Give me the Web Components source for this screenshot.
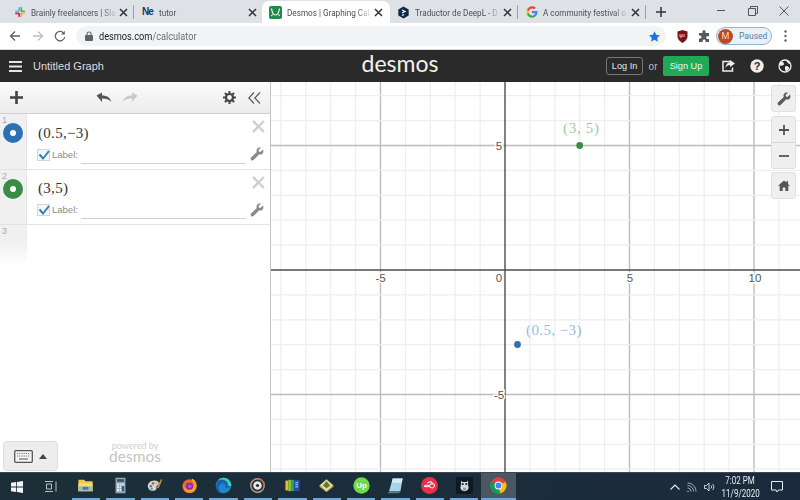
<!DOCTYPE html>
<html>
<head>
<meta charset="utf-8">
<title>Desmos | Graphing Calculator</title>
<style>
html, body { margin: 0; height: 100%; overflow: hidden; }
body { width: 800px; height: 500px; display: flex; flex-direction: column; font-family: "Liberation Sans", Arial, sans-serif; background: #fff; }
</style>
</head>
<body>
<tab-strip>
  <chrome-tab label="Brainly freelancers | Sla" width="133" style="padding-left:13px">
    <svg slot="icon" width="12" height="12" viewBox="0 0 12 12"><rect x="1" y="4.4" width="4.4" height="1.7" rx=".8" fill="#36c5f0"/><rect x="4.3" y="1" width="1.7" height="4" rx=".8" fill="#36c5f0"/><rect x="6.4" y="1" width="1.7" height="4.4" rx=".8" fill="#2eb67d"/><rect x="6.6" y="4.4" width="4.4" height="1.7" rx=".8" fill="#2eb67d"/><rect x="6.6" y="6.6" width="4.4" height="1.7" rx=".8" fill="#ecb22e"/><rect x="6.4" y="7" width="1.7" height="4" rx=".8" fill="#ecb22e"/><rect x="4.3" y="6.8" width="1.7" height="4.2" rx=".8" fill="#e01e5a"/><rect x="1" y="6.6" width="4.4" height="1.7" rx=".8" fill="#e01e5a"/></svg>
  </chrome-tab>
  <tab-sep></tab-sep>
  <chrome-tab label="tutor" width="128">
    <span slot="icon" style="font:bold 10px 'Liberation Sans',sans-serif;color:#123a6b;letter-spacing:-1px;line-height:12px">Ne</span>
  </chrome-tab>
  <chrome-tab label="Desmos | Graphing Cal" width="128" active>
    <svg slot="icon" width="13" height="13" viewBox="0 0 13 13"><rect width="13" height="13" rx="2" fill="#1f8a4c"/><path d="M2.5 2.5c.7 4.5 2.3 6.5 4 6.5s3.300-2 4-6.500" fill="none" stroke="#fff" stroke-width="1.100"/><path d="M2 10l2-1.500M11 10l-2-1.500" stroke="#fff" stroke-width="1"/></svg>
  </chrome-tab>
  <chrome-tab label="Traductor de DeepL - D" width="127">
    <svg slot="icon" width="13" height="13" viewBox="0 0 13 13"><path d="M6.500 .5l5.200 3v6l-5.200 3-5.200-3v-6z" fill="#0f2b46"/><path d="M5 4l3 1.500-3 1.500M5 9.500l2-1" fill="none" stroke="#fff" stroke-width="1.200"/></svg>
  </chrome-tab>
  <tab-sep></tab-sep>
  <chrome-tab label="A community festival o" width="127">
    <svg slot="icon" width="12" height="12" viewBox="0 0 12 12"><path d="M11.500 6.100c0-.4 0-.8-.1-1.100H6v2.200h3.100c-.1.700-.5 1.300-1.100 1.700v1.400h1.800c1.100-1 1.700-2.400 1.700-4.200z" fill="#4285f4"/><path d="M6 11.700c1.500 0 2.800-.5 3.800-1.400L8 8.900c-.5.300-1.200.6-2 .6-1.500 0-2.700-1-3.200-2.400H1v1.400c.9 1.900 2.800 3.200 5 3.200z" fill="#34a853"/><path d="M2.800 7.100C2.600 6.400 2.600 5.600 2.800 4.900V3.500H1C.2 5 .2 7 1 8.500z" fill="#fbbc05"/><path d="M6 2.500c.8 0 1.600.3 2.200.8l1.600-1.600C8.800.8 7.500.3 6 .3 3.800.3 1.900 1.600 1 3.500l1.800 1.400C3.300 3.500 4.500 2.500 6 2.500z" fill="#ea4335"/></svg>
  </chrome-tab>
  <tab-sep></tab-sep>
</tab-strip>
<url-bar url="desmos.com" path="/calculator"></url-bar>
<desmos-header title-text="Untitled Graph"></desmos-header>
<main-area>
  <expr-panel slot="panel">
    <expr-row index="1" color="#2d70b3" math="(0.5,−3)"></expr-row>
    <expr-row index="2" color="#388c46" math="(3,5)"></expr-row>
  </expr-panel>
  <graph-paper slot="graph"></graph-paper>
</main-area>
<task-bar>
  <task-item>
    <svg width="24" height="22" viewBox="0 0 24 22"><path d="M2 3h8l2 2h10v14H2z" fill="#f2c84b"/><path d="M2 8h20v11H2z" fill="#f9dc7a"/><path d="M2 12h20v7H2z" fill="#5aa9c9" opacity=".55"/><path d="M8 13h8v4H8z" fill="#3d7f9e"/></svg>
  </task-item>
  <task-item>
    <svg width="18" height="24" viewBox="0 0 18 24"><rect x="2" y="1" width="14" height="22" fill="#93a6b1"/><rect x="4" y="3" width="10" height="4" fill="#3c5a6c"/><path d="M4 9h3v3H4zM8 9h2v3H8zM11 9h3v3h-3zM4 13h3v3H4zM8 13h2v3H8zM4 17h3v3H4zM8 17h2v3H8z" fill="#e6edf0"/><rect x="11" y="13" width="3" height="7" fill="#1d5f96"/></svg>
  </task-item>
  <task-item>
    <svg width="24" height="24" viewBox="0 0 24 24"><path d="M3 15c-2-5 3-10 9-10 3 0 5 1 6 3 1 3-2 3-3 5s1 3-1 5-9 3-11-3z" fill="#cfd6d9"/><circle cx="7" cy="13" r="1.800" fill="#2f86c9"/><circle cx="10" cy="9" r="1.800" fill="#d9534f"/><circle cx="14.500" cy="9" r="1.500" fill="#e8c33c"/><circle cx="8" cy="17" r="1.600" fill="#4aa564"/><path d="M15 15L21 3l2 1-5 12z" fill="#b98e4a"/></svg>
  </task-item>
  <task-item>
    <svg width="24" height="24" viewBox="0 0 24 24"><circle cx="12" cy="13" r="10" fill="#f4603a"/><path d="M22 12c0-5-3-9-7-10 1 2 1 3 0 4 3 1 4 4 3 7-1 4-6 6-10 4-2-1-4-3-5-6 0 6 4 11 10 11s9-5 9-10z" fill="#f9a02b"/><circle cx="12" cy="13" r="5" fill="#7a2fa8"/><circle cx="12.500" cy="13" r="2.500" fill="#c454c9"/></svg>
  </task-item>
  <task-item>
    <svg width="24" height="24" viewBox="0 0 24 24"><circle cx="12" cy="12" r="11" fill="#1e86d1"/><path d="M1.500 14C2 6 8 1 13 1c6 0 10 5 10 10 0 3-3 4-6 4-2 0-3-1-3-2 1-1 1-3-1-4-4-1-8 2-8 6 0 3 2 6 5 8-5 0-8-4-8.500-9z" fill="#1a5fa8"/><path d="M23 12c0-6-5-11-11-11-3 0-6 1-8 4 3-2 7-2 10 0 3 1 5 4 4 7 2 1 5 1 5 0z" fill="#3ed1b0"/></svg>
  </task-item>
  <task-item>
    <svg width="24" height="24" viewBox="0 0 24 24"><circle cx="12" cy="12" r="9.500" fill="none" stroke="#c89b8c" stroke-width="2"/><path d="M12 2.500a9.500 9.500 0 0 1 9.500 9.500" fill="none" stroke="#b5684f" stroke-width="2"/><circle cx="12" cy="12" r="6" fill="#e8e4e0"/><circle cx="12" cy="12" r="2.200" fill="#2b2b2b"/></svg>
  </task-item>
  <task-item>
    <svg width="24" height="20" viewBox="0 0 24 20"><rect x="2" y="3" width="4" height="14" fill="#e6b92f"/><rect x="6" y="2" width="4" height="16" fill="#8fbe3c"/><rect x="10" y="2" width="4" height="16" fill="#3aa655"/><rect x="14" y="2" width="8" height="16" fill="#1f4fb0"/><path d="M16 6h4M16 9h4M16 12h4" stroke="#dfe8f5" stroke-width="1.200"/></svg>
  </task-item>
  <task-item>
    <svg width="24" height="22" viewBox="0 0 24 22"><path d="M12 2l10 9-10 9L2 11z" fill="#e6d58f"/><path d="M12 5l5 6-5 4-5-4z" fill="#557a3f"/><path d="M2 11l10 9 10-9v2l-10 7L2 13z" fill="#a88b45"/></svg>
  </task-item>
  <task-item>
    <svg width="24" height="24" viewBox="0 0 24 24"><circle cx="12" cy="12" r="11.500" fill="#6fda44"/><text x="12" y="16" text-anchor="middle" font-family="Liberation Sans, sans-serif" font-size="11" font-weight="bold" fill="#fff">Up</text></svg>
  </task-item>
  <task-item>
    <svg width="24" height="24" viewBox="0 0 24 24"><path d="M8 2h14l-3 18H3z" fill="#a9d3e6"/><path d="M8 2h14l-1 6H7z" fill="#d5ecf5"/><path d="M3 20h16l-2 3H1z" fill="#567f91"/></svg>
  </task-item>
  <task-item>
    <svg width="24" height="24" viewBox="0 0 24 24"><circle cx="12" cy="12" r="12" fill="#eb2f4b"/><path d="M5 14c0-3 3-3 5-2l4 3c2 1 5 0 5-3s-3-3-5-2l-4 3c-2 1-5 1-5-1z M9 9c1-2 5-3 7-1" fill="none" stroke="#fff" stroke-width="1.500"/></svg>
  </task-item>
  <task-item>
    <svg width="24" height="24" viewBox="0 0 24 24"><rect width="24" height="24" fill="#0c1a22"/><path d="M7 5l2 2h6l2-2v7c2 3 0 8-5 8s-7-5-5-8z" fill="#d6dadc"/><circle cx="9.500" cy="10" r="1.600" fill="#20282d"/><circle cx="14.500" cy="10" r="1.600" fill="#20282d"/><path d="M10 15h4v4h-4z" fill="#8d979c"/></svg>
  </task-item>
  <task-item active>
    <svg width="24" height="24" viewBox="0 0 24 24"><circle cx="12" cy="12" r="11.500" fill="#db4437"/><path d="M12 12L22 7a11.500 11.500 0 0 1-8 16.300z" fill="#f4c20d"/><path d="M12 12l2 11.300A11.500 11.500 0 0 1 2 6z" fill="#0f9d58"/><circle cx="12" cy="12" r="5.500" fill="#fff"/><circle cx="12" cy="12" r="4.200" fill="#4285f4"/></svg>
  </task-item>
</task-bar>

<script>
const ICONS = {
  x: '<svg width="9" height="9" viewBox="0 0 9 9"><path d="M1 1l7 7M8 1l-7 7" stroke="#333" stroke-width="1.500"/></svg>',
  wrench: c => `<svg width="14" height="14" viewBox="0 0 14 14"><path d="M13 2.500L10.500 5 9 4.500 8.500 3 11 .8C9.300.2 7.500.8 6.800 2.300c-.5 1-.3 2 0 2.700L1 10.600c-.8.800-.3 2.100.4 2.600.7.500 1.600.5 2.200-.1L9.200 7.300c.8.300 1.800.300 2.700-.1 1.400-.8 2-2.800 1.100-4.700z" fill="${c}"/></svg>`
};

class TabStrip extends HTMLElement {
  constructor() {
    super();
    this.attachShadow({ mode: 'open' }).innerHTML = `
    <style>
      :host { display: flex; height: 24px; background: #dee1e6; box-sizing: border-box; padding-top: 1px; align-items: stretch; position: relative; }
      .new { width: 30px; display: flex; align-items: center; justify-content: center; }
      .win { margin-left: auto; display: flex; }
      .win div { width: 31.5px; display: flex; align-items: center; justify-content: center; margin-top: -3px; }
    </style>
    <slot></slot>
    <div class="new"><svg width="10" height="10" viewBox="0 0 10 10"><path d="M5 0v10M0 5h10" stroke="#333" stroke-width="1.500"/></svg></div>
    <div class="win">
      <div><svg width="9" height="9" viewBox="0 0 9 9"><path d="M0 4.500h8" stroke="#555"/></svg></div>
      <div><svg width="10" height="10" viewBox="0 0 10 10"><path d="M.5 2.500h7v7h-7zM2.500 2.500v-2h7v7h-2" fill="none" stroke="#555"/></svg></div>
      <div><svg width="10" height="10" viewBox="0 0 10 10"><path d="M.5.500l9 9M9.500.500l-9 9" stroke="#555"/></svg></div>
    </div>`;
  }
}

class ChromeTab extends HTMLElement {
  constructor() {
    super();
    const w = this.getAttribute('width');
    this.attachShadow({ mode: 'open' }).innerHTML = `
    <style>
      :host { display: flex; align-items: center; width: ${w}px; flex: none; box-sizing: border-box; padding: 0 0 0 7px; font: 9.500px Roboto, "Liberation Sans", sans-serif; color: #4c5054; }
      :host([active]) { background: #fff; border-radius: 7px 7px 0 0; }
      :host([active]) .close { margin-right: 7px; }
      .icon { width: 13px; height: 13px; display: flex; align-items: center; justify-content: center; flex: none; margin-right: 5px; }
      .label { flex: 1; min-width: 0; white-space: nowrap; -webkit-mask-image: linear-gradient(90deg, #000 82%, transparent 100%); mask-image: linear-gradient(90deg, #000 82%, transparent 100%); }
      /* the reference text is squeezed sideways by its downscale */
      .label span { display: block; width: 116%; transform: scaleX(.86); transform-origin: left; }
      .close { flex: none; width: 9px; margin: 0 5.500px 0 2px; display: flex; }
    </style>
    <div class="icon"><slot name="icon"></slot></div>
    <div class="label"><span>${this.getAttribute('label')}</span></div>
    <div class="close">${ICONS.x}</div>`;
  }
}

class TabSep extends HTMLElement {
  constructor() {
    super();
    this.attachShadow({ mode: 'open' }).innerHTML = `
    <style>:host { display: block; width: 1px; height: 14px; margin: 4px 0 0; background: #9da1a6; flex: none; }</style>`;
  }
}

class UrlBar extends HTMLElement {
  constructor() {
    super();
    this.attachShadow({ mode: 'open' }).innerHTML = `
    <style>
      :host { display: flex; align-items: center; height: 26px; background: #fff; flex: none; font: 10.500px Roboto, "Liberation Sans", sans-serif; }
      .nav { width: 20px; display: flex; justify-content: center; margin-left: 5px; }
      .nav + .nav { margin-left: 2.500px; }
      .omni { width: 590px; height: 20px; margin-left: 6px; background: #f1f3f4; border-radius: 10px; display: flex; align-items: center; box-sizing: border-box; padding: 0 6px 0 9px; color: #222; }
      .addr { width: 115px; flex: none; white-space: nowrap; transform: scaleX(.875); transform-origin: left; }
      .addr span { color: #6a6e73; }
      .lock { margin-right: 6px; display: flex; }
      .star { margin-left: auto; display: flex; }
      .ext { display: flex; align-items: center; }
      .pill { margin-left: 6px; width: 56px; height: 18px; box-sizing: border-box; border: 1px solid #8fb5d2; border-radius: 9px; background: #e8f1f8; display: flex; align-items: center; padding-left: 1px; gap: 6px; color: #5b7fa0; font-size: 8.500px; }
      .avatar { width: 15px; height: 15px; border-radius: 50%; background: #bd4a1c; color: #f3d9cc; font-size: 9px; text-align: center; line-height: 15px; flex: none; }
      .dots { margin-left: 11.500px; display: flex; }
    </style>
    <div class="nav"><svg width="12" height="12" viewBox="0 0 12 12"><path d="M11 6H2M6 1.500L1.500 6 6 10.500" fill="none" stroke="#5f6368" stroke-width="1.300"/></svg></div>
    <div class="nav"><svg width="12" height="12" viewBox="0 0 12 12"><path d="M1 6h9M6 1.500L10.500 6 6 10.500" fill="none" stroke="#bcc0c4" stroke-width="1.300"/></svg></div>
    <div class="nav"><svg width="12" height="12" viewBox="0 0 12 12"><path d="M10 3.500A4.700 4.700 0 1 0 10.700 7" fill="none" stroke="#5f6368" stroke-width="1.300"/><path d="M10.800 .8v3.700H7.100z" fill="#5f6368"/></svg></div>
    <div class="omni">
      <div class="lock"><svg width="8" height="10" viewBox="0 0 8 10"><rect y="4" width="8" height="6" rx="1" fill="#5f6368"/><path d="M2 4.500V3a2 2 0 0 1 4 0v1.500" fill="none" stroke="#5f6368" stroke-width="1.100"/></svg></div>
      <div class="addr">${this.getAttribute('url')}<span>${this.getAttribute('path')}</span></div>
      <div class="star"><svg width="11" height="11" viewBox="0 0 12 12"><path d="M6 .3l1.800 3.800 4.100.5-3 2.900.8 4.100L6 9.600l-3.700 2 .8-4.100-3-2.900 4.100-.5z" fill="#1a73e8"/></svg></div>
    </div>
    <div class="ext" style="margin-left:11px"><svg width="11" height="13" viewBox="0 0 11 13"><path d="M.5 1.500L5.500 0l5 1.500v5c0 3-2.500 5-5 6.500-2.500-1.500-5-3.500-5-6.500z" fill="#7d1414"/><path d="M3 4v3h2V4M7 4v3" fill="none" stroke="#f3d2d2" stroke-width=".9"/></svg></div>
    <div class="ext" style="margin-left:10px"><svg width="12" height="12" viewBox="0 0 12 12"><path d="M4.500 1.500a1.500 1.500 0 0 1 3 0V3H11v3.200H9.500a1.400 1.400 0 0 0 0 2.800H11V12H7.500v-1.200a1.400 1.400 0 0 0-2.800 0V12H1V8.500h1a1.500 1.500 0 0 0 0-3H1V3h3.500z" fill="#55585c"/></svg></div>
    <div class="pill"><div class="avatar">M</div>Paused</div>
    <div class="dots"><svg width="3" height="12" viewBox="0 0 3 12"><circle cx="1.500" cy="1.500" r="1.200" fill="#5f6368"/><circle cx="1.500" cy="6" r="1.200" fill="#5f6368"/><circle cx="1.500" cy="10.500" r="1.200" fill="#5f6368"/></svg></div>`;
  }
}

class DesmosHeader extends HTMLElement {
  constructor() {
    super();
    this.attachShadow({ mode: 'open' }).innerHTML = `
    <style>
      :host { display: flex; align-items: center; height: 32px; background: #2a2a2a; border-top: 1px solid #d8d8d8; flex: none; color: #e6e6e6; font: 9.200px "Liberation Sans", sans-serif; position: relative; box-sizing: content-box; }
      .burger { margin-left: 9px; display: flex; }
      .title { margin-left: 11px; font-size: 11px; color: #ddd; }
      .logo { position: absolute; left: 0; right: 0; text-align: center; font: 400 23px Lato, "Open Sans", sans-serif; color: #f2f2f2; line-height: 32px; top: -3px; }
      .right { margin-left: auto; display: flex; align-items: center; position: relative; }
      .login { width: 37px; height: 18px; box-sizing: border-box; border: 1px solid #777; border-radius: 3px; text-align: center; line-height: 16px; }
      .or { margin: 0 5.500px; color: #bbb; font-size: 10px; }
      .signup { width: 46px; height: 20px; background: #20aa55; border-radius: 2px; text-align: center; line-height: 20px; color: #eaf7ef; }
      .ic { display: flex; }
    </style>
    <div class="burger"><svg width="13" height="11" viewBox="0 0 13 11"><path d="M0 1h13M0 5.500h13M0 10h13" stroke="#e6e6e6" stroke-width="1.800"/></svg></div>
    <div class="title">${this.getAttribute('title-text')}</div>
    <div class="logo">desmos</div>
    <div class="right">
      <div class="login">Log In</div>
      <div class="or">or</div>
      <div class="signup">Sign Up</div>
      <div class="ic" style="margin-left:13px"><svg width="13" height="12" viewBox="0 0 13 12"><path d="M9 1.500H1v9.500h9.500V7.500" fill="none" stroke="#eee" stroke-width="1.500"/><path d="M8 0l5 3.500L8 7V5C6 5 4.500 6 3.500 8 3.500 5 5 2.500 8 2.200z" fill="#eee"/></svg></div>
      <div class="ic" style="margin-left:15px"><svg width="14" height="14" viewBox="0 0 14 14"><circle cx="7" cy="7" r="6.700" fill="#eee"/><text x="7" y="11" text-anchor="middle" font-family="Liberation Sans, sans-serif" font-weight="bold" font-size="11" fill="#2a2a2a">?</text></svg></div>
      <div class="ic" style="margin:0 8px 0 14px"><svg width="14" height="14" viewBox="0 0 14 14"><circle cx="7" cy="7" r="6" fill="#2a2a2a" stroke="#eee" stroke-width="1.300"/><path d="M3 2.500c2 .5 3 1 3 2.500S3.500 7 2 6.500 1.500 3.500 3 2.500zM8 7c2 0 3.500 1 3 2.500S9 12.500 8 12s-1-2-1-3 0-2 1-2zM8.500 1.500c2 .3 3.500 2 3.800 3.500C11 5 9 4 8.500 1.500z" fill="#eee"/></svg></div>
    </div>`;
  }
}

class MainArea extends HTMLElement {
  constructor() {
    super();
    this.attachShadow({ mode: 'open' }).innerHTML = `
    <style>:host { display: flex; flex: none; height: 390px; overflow: hidden; }</style>
    <slot name="panel"></slot><slot name="graph"></slot>`;
  }
}

class ExprPanel extends HTMLElement {
  constructor() {
    super();
    this.attachShadow({ mode: 'open' }).innerHTML = `
    <style>
      :host { display: flex; flex-direction: column; width: 271px; flex: none; box-sizing: border-box; border-right: 1px solid #c4c4c4; position: relative; background: #fff; height: 390px; }
      .tools { height: 32px; flex: none; box-sizing: border-box; display: flex; align-items: center; background: linear-gradient(#fbfbfb, #ececec); border-bottom: 1px solid #cfcfcf; padding: 0 9px 0 10px; }
      .undo { display: flex; gap: 10px; margin-left: 73px; }
      .gear { margin-left: auto; display: flex; }
      .hide { margin-left: 12px; display: flex; }
      .empty { height: 56px; flex: none; display: flex; background: #fff; }
      .gut { width: 27px; height: 40px; box-sizing: border-box; background: linear-gradient(#f0f0f0, #f0f0f0 45%, #fff); font: 9px "Liberation Sans", sans-serif; color: #aaa; padding: 1px 0 0 2px; }
      .foot { margin-top: auto; display: flex; align-items: flex-end; padding: 0 0 1px 3px; }
      .kbd { width: 55px; height: 30px; box-sizing: border-box; background: #ededed; border: 1px solid #dcdcdc; border-radius: 4px; display: flex; align-items: center; padding-left: 10px; gap: 6px; }
      .pow { width: 56px; margin-left: 49px; text-align: center; color: #cfcfcf; font: 9px/8px Lato, sans-serif; margin-bottom: 8px; }
      .pow b { display: block; font: 400 15.500px/13px Lato, sans-serif; color: #c4c4c4; }
    </style>
    <div class="tools">
      <svg width="13" height="13" viewBox="0 0 13 13"><path d="M6.500 0v13M0 6.500h13" stroke="#444" stroke-width="2.600"/></svg>
      <div class="undo">
        <svg width="16" height="11" viewBox="0 0 16 11"><path d="M.5 3.500L6 .5v3c5 0 8 2 9.500 6.500C13 7 10 6.500 6 6.500v3.500z" fill="#555"/></svg>
        <svg width="16" height="11" viewBox="0 0 16 11"><path d="M15.500 3.500L10 .5v3c-5 0-8 2-9.500 6.500C3 7 6 6.500 10 6.500v3.500z" fill="#c9c9c9"/></svg>
      </div>
      <div class="gear"><svg width="13" height="13" viewBox="0 0 13 13"><circle cx="6.500" cy="6.500" r="3.500" fill="none" stroke="#444" stroke-width="2.200"/><path d="M6.500 0v2.500M6.500 10.500V13M0 6.500h2.500M10.500 6.500H13M1.900 1.900l1.800 1.800M9.300 9.300l1.800 1.800M1.900 11.100l1.800-1.800M9.300 3.700l1.800-1.800" stroke="#444" stroke-width="2"/></svg></div>
      <div class="hide"><svg width="13" height="12" viewBox="0 0 13 12"><path d="M6 .5L.8 6 6 11.500M12 .5L6.800 6 12 11.500" fill="none" stroke="#555" stroke-width="1.100"/></svg></div>
    </div>
    <slot></slot>
    <div class="empty"><div class="gut">3</div></div>
    <div class="foot">
      <div class="kbd">
        <svg width="19" height="13" viewBox="0 0 19 13"><rect x=".7" y=".7" width="17.600" height="11.600" rx="1" fill="#f4f4f4" stroke="#555" stroke-width="1.300"/><path d="M3 3.500h13M3 6h13" stroke="#777" stroke-dasharray="1.200 1" stroke-width="1.200"/><path d="M5 9h9" stroke="#777" stroke-width="1.300"/></svg>
        <svg width="8" height="5" viewBox="0 0 8 5"><path d="M0 5l4-5 4 5z" fill="#444"/></svg>
      </div>
      <div class="pow">powered by<b>desmos</b></div>
    </div>`;
  }
}

class ExprRow extends HTMLElement {
  constructor() {
    super();
    const color = this.getAttribute('color');
    this.attachShadow({ mode: 'open' }).innerHTML = `
    <style>
      :host { display: flex; height: 55.500px; flex: none; box-sizing: border-box; border-bottom: 1px solid #e2e2e2; background: #fff; }
      .gut { width: 27px; flex: none; box-sizing: border-box; background: #f0f0f0; border-right: 1px solid #e4e4e4; font: 9px "Liberation Sans", sans-serif; color: #aaa; padding: 1px 0 0 2px; position: relative; }
      .dot { position: absolute; left: 3px; top: 9px; width: 20px; height: 20px; border-radius: 50%; background: ${color}; display: flex; align-items: center; justify-content: center; }
      .dot i { width: 6px; height: 6px; background: #fff; border-radius: 50%; }
      .body { flex: 1; position: relative; padding: 9.500px 0 0 10px; }
      .math { font: 15px "Liberation Serif", "Times New Roman", serif; color: #333; letter-spacing: .3px; line-height: 18px; margin-left: 1px; }
      .opts { display: flex; align-items: flex-start; margin-top: 5px; height: 17px; font: 9.500px/12px "Liberation Sans", sans-serif; color: #8c8c8c; }
      .cb { width: 13px; height: 12px; box-sizing: border-box; border: 1px solid #cfd6dd; background: #f4f7fa; margin: 2px 2px 0 0; position: relative; }
      .cb svg { position: absolute; left: 0; top: -1px; }
      .lb { margin-top: 2px; }
      .line { width: 165px; height: 16px; border-bottom: 1px solid #d0d0d0; margin-left: 3px; }
      .del { position: absolute; right: 5px; top: 5px; }
      .wr { position: absolute; right: 6px; top: 33px; }
    </style>
    <div class="gut">${this.getAttribute('index')}<div class="dot"><i></i></div></div>
    <div class="body">
      <div class="math">${this.getAttribute('math')}</div>
      <div class="opts">
        <div class="cb"><svg width="12" height="12" viewBox="0 0 12 12"><path d="M1.500 5.500L5 9.500 11 2" fill="none" stroke="#2f7fb8" stroke-width="2"/></svg></div>
        <div class="lb">Label:</div><div class="line"></div>
      </div>
      <div class="del"><svg width="13" height="13" viewBox="0 0 13 13"><path d="M1 1l11 11M12 1L1 12" stroke="#cfcfcf" stroke-width="2.400"/></svg></div>
      <div class="wr">${ICONS.wrench('#8a8a8a')}</div>
    </div>`;
  }
}

class GraphPaper extends HTMLElement {
  constructor() {
    super();
    // origin in page coordinates minus the graph's own corner (271, 82)
    const ox = 234, oy = 188, unit = 24.9;
    let lines = '';
    for (let i = -10; i <= 12; i++) {
      const x = ox + i * unit;
      if (x < 0 || i === 0) continue;
      const major = i % 5 === 0;
      lines += `<line x1="${x}" y1="0" x2="${x}" y2="390" stroke="${major ? '#bcbcbc' : '#eeeeee'}" stroke-width="${major ? 1.400 : 1.200}"/>`;
    }
    for (let i = -8; i <= 8; i++) {
      const y = oy + i * unit;
      if (i === 0) continue;
      const major = i % 5 === 0;
      lines += `<line x1="0" y1="${y}" x2="529" y2="${y}" stroke="${major ? '#bcbcbc' : '#eeeeee'}" stroke-width="${major ? 1.400 : 1.200}"/>`;
    }
    const tick = (x, y, t) => `<text x="${x}" y="${y}" text-anchor="middle" font-family="Liberation Sans, sans-serif" font-size="11.500" fill="#555" stroke="#fff" stroke-width="3" paint-order="stroke">${t}</text>`;
    this.attachShadow({ mode: 'open' }).innerHTML = `
    <style>
      :host { display: block; flex: 1; position: relative; background: #fff; height: 390px; }
      svg.paper { display: block; }
      .ctl { position: absolute; right: 4px; width: 25px; box-sizing: border-box; background: #efefef; border: 1px solid #e0e0e0; border-radius: 3px; display: flex; flex-direction: column; }
      .ctl div { height: 25px; display: flex; align-items: center; justify-content: center; }
      .ctl div + div { border-top: 1px solid #d6d6d6; }
    </style>
    <svg class="paper" width="529" height="390" viewBox="0 0 529 390">
      ${lines}
      <line x1="${ox}" y1="0" x2="${ox}" y2="390" stroke="#4d4d4d" stroke-width="1.400"/>
      <line x1="0" y1="${oy}" x2="529" y2="${oy}" stroke="#4d4d4d" stroke-width="1.400"/>
      ${tick(109.500, 200, '-5')}${tick(228, 200, '0')}${tick(359, 200, '5')}${tick(484, 200, '10')}
      ${tick(228, 68, '5')}${tick(228, 317, '-5')}
      <circle cx="308.700" cy="63.500" r="3.400" fill="#388c46"/>
      <circle cx="246.500" cy="262.500" r="3.400" fill="#2d70b3"/>
      <text x="292" y="51" font-family="Liberation Serif, serif" font-size="15" letter-spacing=".7" fill="#388c46" fill-opacity=".5">(3, 5)</text>
      <text x="255" y="253" font-family="Liberation Serif, serif" font-size="15" letter-spacing=".4" fill="#2d70b3" fill-opacity=".5">(0.5, −3)</text>
    </svg>
    <div class="ctl" style="top:3px"><div>${ICONS.wrench('#5a5a5a')}</div></div>
    <div class="ctl" style="top:34px">
      <div><svg width="10" height="10" viewBox="0 0 10 10"><path d="M5 0v10M0 5h10" stroke="#555" stroke-width="1.800"/></svg></div>
      <div><svg width="10" height="2" viewBox="0 0 10 2"><path d="M0 1h10" stroke="#555" stroke-width="1.800"/></svg></div>
    </div>
    <div class="ctl" style="top:90px"><div><svg width="12" height="11" viewBox="0 0 12 11"><path d="M6 .5L0 5.800h1.700V11h3V7.500h2.600V11h3V5.800H12L10 4V1H8.500v1.600z" fill="#555"/></svg></div></div>`;
  }
}

class TaskBar extends HTMLElement {
  constructor() {
    super();
    this.attachShadow({ mode: 'open' }).innerHTML = `
    <style>
      :host { display: flex; align-items: stretch; height: 28px; flex: none; background: linear-gradient(90deg, #1c2f38, #1b2b3d); border-top: 1px solid #3a4a55; box-sizing: border-box; color: #e8ecef; font: 10px Roboto, "Liberation Sans", sans-serif; }
      .start { width: 34px; display: flex; align-items: center; justify-content: center; }
      .view { width: 34.800px; display: flex; align-items: center; justify-content: center; }
      .tray { margin-left: auto; display: flex; align-items: center; }
      .clock { text-align: center; line-height: 13px; width: 46px; margin-left: 2px; transform: scaleX(.8); }
      .note { margin: 0 17px 0 8.500px; display: flex; }
      .t { display: flex; }
    </style>
    <div class="start"><svg width="12" height="12" viewBox="0 0 12 12"><path d="M0 1.700L5 1v4.600H0zM5.800.9L12 0v5.600H5.800zM0 6.400h5V11l-5-.7zM5.800 6.400H12V12l-6.200-.9z" fill="#f2f4f5"/></svg></div>
    <div class="view"><svg width="13" height="11" viewBox="0 0 13 11"><path d="M0 .5h8M0 10.500h8M1.500 3h5v5h-5zM11 .5v10" fill="none" stroke="#b6c0c6"/></svg></div>
    <slot></slot>
    <div class="tray">
      <div class="t" style="margin-right:7px"><svg width="10" height="6" viewBox="0 0 10 6"><path d="M.5 5.500L5 1l4.500 4.500" fill="none" stroke="#e4e8ea" stroke-width="1.100"/></svg></div>
      <div class="t" style="margin-right:6.500px"><svg width="10" height="10" viewBox="0 0 10 10"><path d="M1 9.500a1 1 0 1 0 .1 0M.5 6c2 0 3.500 1.500 3.500 3.500M.5 3.500c3.300 0 6 2.700 6 6M.5 1c4.700 0 8.500 3.800 8.500 8.500" fill="none" stroke="#aab4ba"/></svg></div>
      <div class="t"><svg width="11" height="10" viewBox="0 0 11 10"><path d="M.5 3.500h2L5 1v8L2.500 6.500h-2zM7 3.500a2 2 0 0 1 0 3M8.500 2a4 4 0 0 1 0 6" fill="none" stroke="#dfe4e7" stroke-width=".9"/></svg></div>
      <div class="clock">7:02 PM<br>11/9/2020</div>
      <div class="note"><svg width="12" height="12" viewBox="0 0 12 12"><path d="M.5.500h11v8.500H7.500L6 11 5 9H.5z" fill="none" stroke="#e8ecef"/></svg></div>
    </div>`;
  }
}

class TaskItem extends HTMLElement {
  constructor() {
    super();
    this.attachShadow({ mode: 'open' }).innerHTML = `
    <style>
      :host { display: flex; align-items: center; justify-content: center; width: 34.400px; flex: none; position: relative; box-sizing: border-box; padding-bottom: 2px; }
      :host([active]) { background: #4a5864; }
      ::slotted(svg) { display: block; width: 17px; height: 17px; }
      .bar { position: absolute; left: 3px; right: 3px; bottom: 0; height: 2px; background: #6fa8d8; }
      :host([active]) .bar { left: 0; right: 0; }
    </style>
    <slot></slot><div class="bar"></div>`;
  }
}

customElements.define('tab-strip', TabStrip);
customElements.define('chrome-tab', ChromeTab);
customElements.define('tab-sep', TabSep);
customElements.define('url-bar', UrlBar);
customElements.define('desmos-header', DesmosHeader);
customElements.define('main-area', MainArea);
customElements.define('expr-panel', ExprPanel);
customElements.define('expr-row', ExprRow);
customElements.define('graph-paper', GraphPaper);
customElements.define('task-bar', TaskBar);
customElements.define('task-item', TaskItem);
</script>
</body>
</html>
